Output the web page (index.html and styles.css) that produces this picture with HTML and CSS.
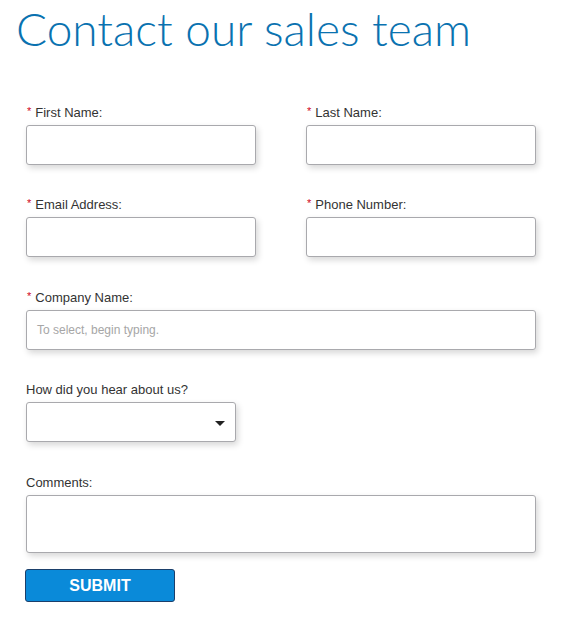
FILE: index.html
```html
<!DOCTYPE html>
<html>
<head>
<meta charset="utf-8">
<link rel="stylesheet" href="styles.css">
</head>
<body>
<div class="page">
  <h1 class="title">Contact our sales team</h1>
  <form class="form">
    <div class="row two r1">
      <div class="field">
        <label class="label"><span class="req">*</span>First Name:</label>
        <div class="input"></div>
      </div>
      <div class="field">
        <label class="label"><span class="req">*</span>Last Name:</label>
        <div class="input"></div>
      </div>
    </div>
    <div class="row two r2">
      <div class="field">
        <label class="label"><span class="req">*</span>Email Address:</label>
        <div class="input"></div>
      </div>
      <div class="field">
        <label class="label"><span class="req">*</span>Phone Number:</label>
        <div class="input"></div>
      </div>
    </div>
    <div class="row r1">
      <div class="field">
        <label class="label"><span class="req">*</span>Company Name:</label>
        <div class="input wide"><span class="placeholder">To select, begin typing.</span></div>
      </div>
    </div>
    <div class="row r2">
      <div class="field">
        <label class="label">How did you hear about us?</label>
        <div class="input select"><span class="caret"></span></div>
      </div>
    </div>
    <div class="row last">
      <div class="field">
        <label class="label">Comments:</label>
        <div class="input wide area"></div>
      </div>
    </div>
    <button type="button" class="submit">SUBMIT</button>
  </form>
</div>
</body>
</html>
```
FILE: styles.css
```css
html, body {
  margin: 0;
  padding: 0;
  background: #ffffff;
}
.page {
  padding: 0 0 0 26px;
  font-family: "Liberation Sans", Arial, sans-serif;
}
.title {
  margin: 0 0 0 -10px;
  padding-top: 0;
  font-family: Lato, "Open Sans", sans-serif;
  font-weight: 300;
  font-size: 46px;
  line-height: 58px;
  color: #0a72b0;
  letter-spacing: 0;
}
.form {
  margin-top: 46px;
  width: 510px;
}
.row {
  display: flex;
  gap: 50px;
}
.row.r1 {
  margin-bottom: 31px;
}
.row.r2 {
  margin-bottom: 32px;
}
.row.last {
  margin-bottom: 16px;
}
.row.two .field {
  width: 230px;
}
.field {
  display: flex;
  flex-direction: column;
}
.label {
  font-size: 13px;
  line-height: 16px;
  padding-top: 1px;
  color: #333333;
  margin-bottom: 4px;
}
.req {
  color: #d0021b;
  font-size: 11px;
  margin: 0 4px 0 1px;
  position: relative;
  top: -2px;
}
.input {
  box-sizing: border-box;
  height: 40px;
  width: 230px;
  border: 1px solid #a9a9ad;
  border-radius: 3px;
  background: #fff;
  box-shadow: 2px 3px 6px rgba(0, 0, 0, 0.16);
  display: flex;
  align-items: center;
}
.input.wide {
  width: 510px;
}
.input.select {
  width: 210px;
  justify-content: flex-end;
  padding-right: 10px;
}
.input.area {
  height: 58px;
}
.placeholder {
  font-size: 12px;
  color: #a6a6a6;
  padding-left: 10px;
}
.caret {
  width: 0;
  height: 0;
  border-left: 5px solid transparent;
  border-right: 5px solid transparent;
  border-top: 5px solid #222;
  margin-top: 2px;
}
.submit {
  display: block;
  box-sizing: border-box;
  width: 150px;
  height: 33px;
  margin-left: -1px;
  background: #0a8ad9;
  border: 1px solid #1b3f6b;
  border-radius: 3px;
  color: #ffffff;
  font-family: "Liberation Sans", Arial, sans-serif;
  font-weight: bold;
  font-size: 16px;
  padding: 0;
}
```
